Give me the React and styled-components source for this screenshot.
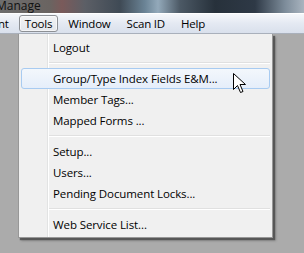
import React from 'react';
import styled, { createGlobalStyle } from 'styled-components';

const GlobalStyle = createGlobalStyle`
    html, body {
        margin: 0;
        padding: 0;
        background: #ababab;
    }
    body {
        font-family: "Open Sans", "Noto Sans", sans-serif;
        font-size: 11px;
        color: #000;
    }
`;

const Screen = styled.div`
    position: relative;
    width: 304px;
    height: 253px;
    overflow: hidden;
    background: #ababab;
`;

const TitleBar = styled.div`
    height: 13px;
    background: linear-gradient(90deg, #6d6d6d 0px, #6a6461 50px, #7a5a5a 62px, #5c5f66 85px, #3f4a55 120px, #6b8496 145px, #93a9ba 158px, #4c5965 180px, #27313b 215px, #2e3946 255px, #7d8c9a 285px, #a9b4bf 304px);
    display: flex;
    align-items: flex-end;
    overflow: hidden;
`;

const TitleText = styled.span`
    font-family: "Open Sans", sans-serif;
    font-size: 12px;
    line-height: 13px;
    margin-left: -4px;
    color: #111;
    position: relative;
    top: -1px;
`;

const MenuBar = styled.div`
    height: 19px;
    border-top: 1px solid #ffffff;
    border-bottom: 1px solid #a9b0bb;
    background: linear-gradient(180deg, #f5f7fb 0%, #e4e9f2 50%, #d9e0ec 100%);
    display: flex;
    align-items: center;
    overflow: hidden;
`;

const MenuTitle = styled.div`
    height: 17px;
    display: flex;
    align-items: center;
    padding: 0 5px;
    margin: 0 2px;
    box-sizing: border-box;
    border: 1px solid ${p => (p.$open ? '#8d9095' : 'transparent')};
    border-radius: 3px;
    background: ${p => (p.$open ? 'linear-gradient(180deg, #f2f3f5 0%, #e3e6eb 100%)' : 'transparent')};
    box-shadow: ${p => (p.$open ? 'inset 0 0 0 1px rgba(255,255,255,0.6)' : 'none')};
    font-size: 11.5px;
    letter-spacing: -0.2px;
    white-space: nowrap;
    &:first-child {
        margin-left: -8px;
    }
`;

const Body = styled.div`
    display: flex;
    padding-left: 18px;
`;

const Dropdown = styled.div`
    width: 255px;
    box-sizing: border-box;
    background: #f0f0f0;
    border: 1px solid #979797;
    border-top: none;
    box-shadow: 2px 2px 1px rgba(70, 70, 70, 0.75), 3px 3px 2px rgba(90, 90, 90, 0.4);
    padding: 3px 2px 2px 2px;
    position: relative;
    display: flex;
    flex-direction: column;
`;

const IconGutter = styled.div`
    position: absolute;
    left: 28px;
    top: 0;
    bottom: 0;
    width: 1px;
    background: #e2e3e3;
    border-right: 1px solid #ffffff;
`;

const Item = styled.div`
    position: relative;
    height: 21px;
    box-sizing: border-box;
    display: flex;
    align-items: center;
    padding-left: 31px;
    font-size: 11.5px;
    letter-spacing: -0.1px;
    border: 1px solid ${p => (p.$hot ? '#a8cbf1' : 'transparent')};
    border-radius: 3px;
    background: ${p => (p.$hot ? 'linear-gradient(180deg, #f3f7fc 0%, #e5eefa 100%)' : 'transparent')};
    z-index: 1;
`;

const Separator = styled.div`
    height: 10px;
    display: flex;
    align-items: center;
    padding-left: 28px;
    &::after {
        content: '';
        flex: 1;
        height: 1px;
        background: #e0e0e0;
        border-bottom: 1px solid #ffffff;
    }
`;

const Cursor = styled.svg`
    position: absolute;
    left: 233px;
    top: 73px;
    z-index: 5;
`;

const menus = [
    { label: 'nt' },
    { label: 'Tools', open: true },
    { label: 'Window' },
    { label: 'Scan ID' },
    { label: 'Help' },
];

const entries = [
    'Logout',
    '-',
    { label: 'Group/Type Index Fields E&M...', hot: true },
    'Member Tags...',
    'Mapped Forms ...',
    '-',
    'Setup...',
    'Users...',
    'Pending Document Locks...',
    '-',
    'Web Service List...',
];

export default function App() {
    return (
        <Screen>
            <GlobalStyle />
            <TitleBar>
                <TitleText>Manage</TitleText>
            </TitleBar>
            <MenuBar>
                {menus.map((m, i) => (
                    <MenuTitle key={i} $open={m.open}>{m.label}</MenuTitle>
                ))}
            </MenuBar>
            <Body>
                <Dropdown>
                    <IconGutter />
                    {entries.map((e, i) => {
                        if (e === '-') return <Separator key={i} />;
                        const label = typeof e === 'string' ? e : e.label;
                        return <Item key={i} $hot={e.hot}>{label}</Item>;
                    })}
                </Dropdown>
            </Body>
            <Cursor width="13" height="21" viewBox="0 0 13 21">
                <path d="M0.5 0.5 L0.5 16.5 L4.5 12.5 L7.5 19.5 L10 18.5 L7 11.5 L12.5 11.5 Z" fill="#ffffff" stroke="#000000" strokeWidth="1" strokeLinejoin="miter" />
            </Cursor>
        </Screen>
    );
}
